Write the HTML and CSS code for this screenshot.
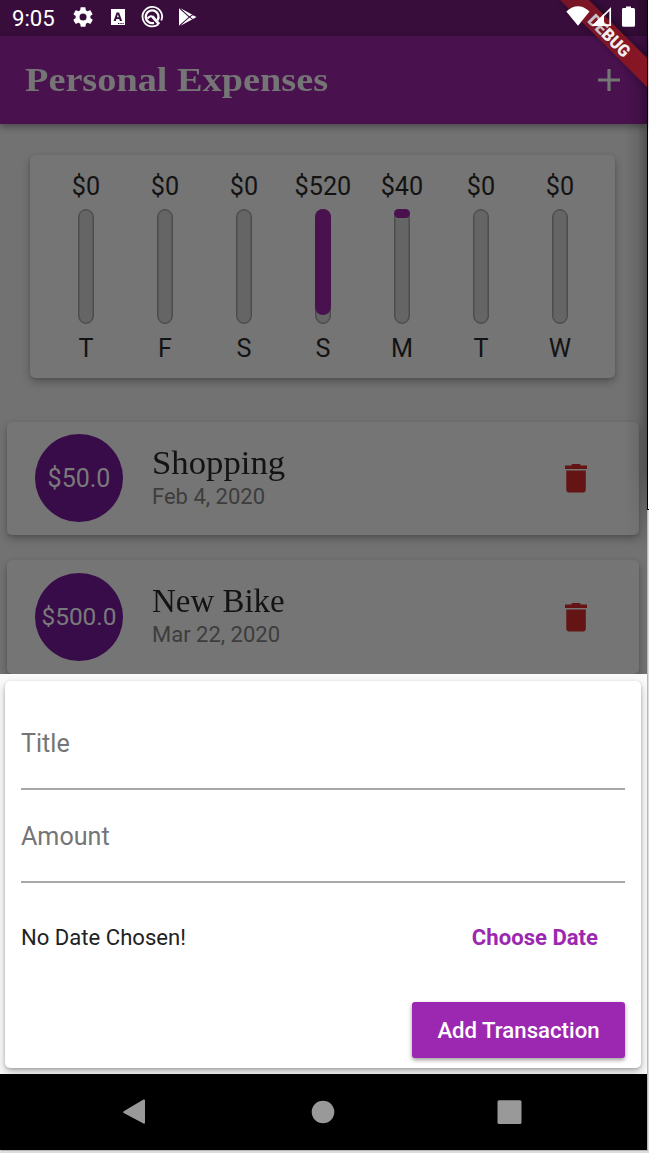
FILE: index.html
```html
<!DOCTYPE html>
<html lang="en">
<head>
<meta charset="utf-8">
<title>Personal Expenses</title>
<link rel="stylesheet" href="styles.css">
</head>
<body>
<div class="phone">
  <header class="status">
    <span class="clock">9:05</span>
    <svg class="status-icons" width="130" height="36" viewBox="70 0 130 36" fill="#fff">
      <g transform="translate(71.3 5.3) scale(.98)"><path d="M19.4 13c0-.3.1-.6.1-1s0-.7-.1-1l2.1-1.600c.2-.2.2-.4.1-.6l-2-3.500c-.1-.2-.4-.3-.6-.2l-2.500 1c-.5-.4-1.100-.7-1.700-1l-.4-2.600c0-.3-.2-.4-.5-.4h-4c-.2 0-.4.1-.5.4L9.100 5.100c-.6.2-1.200.6-1.700 1l-2.500-1c-.2-.1-.5 0-.6.2l-2 3.500c-.1.2-.1.400.1.6L4.500 11c0 .3-.1.600-.1 1s0 .7.100 1l-2.100 1.600c-.2.2-.2.4-.1.6l2 3.500c.1.200.4.300.6.2l2.500-1c.500.4 1.100.7 1.700 1l.4 2.600c0 .2.200.4.5.4h4c.2 0 .5-.2.5-.4l.4-2.600c.6-.2 1.200-.6 1.700-1l2.500 1c.2.100.5 0 .6-.2l2-3.500c.1-.2.1-.5-.1-.6zM12 15.600a3.600 3.600 0 1 1 0-7.200 3.600 3.600 0 0 1 0 7.200z" fill-rule="evenodd"/></g>
      <path fill-rule="evenodd" d="M111 9h14v16h-14zM113.600 21h2.200l.6-1.900h2.900l.6 1.900h2.200l-3-8.600h-2.500zM117 17.300l.9-3 .9 3zM118 23v1h1.400v-1zM120.300 23v1h1.400v-1zM122.500 23v1h1.200v-1z"/>
      <g fill="none" stroke="#fff"><path d="M158.500 24.200A9.800 9.800 0 1 1 161.300 20.500" stroke-width="1.800"/><path d="M157.500 20.300A6.400 6.400 0 1 0 154 22.900" stroke-width="2.300"/><path d="M152.300 16.500l6.800 7.600" stroke-width="2.700"/><path d="M147.500 18.500q3.500-4.200 6.400-.8" stroke-width="2"/></g>
      <path d="M179 8.300L188.500 17 179 25.800z"/><path d="M180 8l12.500 6.800-3.400 1.800zM180 26l12.500-6.700-3.400-2zM193 15.200l3.500 1.800-3.500 2-3-2z"/>
      <path d="M180 8.500l12.500 11M180 25.500l12.500-11" stroke="#380d3c" stroke-width=".8"/>
    </svg>
  </header>
  <div class="appbar">
    <h1 class="app-title">Personal Expenses</h1>
    <svg class="plus" width="22" height="22" viewBox="0 0 22 22"><path d="M11 0v22M0 11h22" stroke="#757575" stroke-width="3.200"/></svg>
  </div>
  <main class="content">
    <section class="chart">
      <div class="day"><span>$0</span><i class="bar"></i><span>T</span></div>
      <div class="day"><span>$0</span><i class="bar"></i><span>F</span></div>
      <div class="day"><span>$0</span><i class="bar"></i><span>S</span></div>
      <div class="day"><span>$520</span><i class="bar"><b class="fill" style="height:106px"></b></i><span>S</span></div>
      <div class="day"><span>$40</span><i class="bar"><b class="fill" style="height:9px"></b></i><span>M</span></div>
      <div class="day"><span>$0</span><i class="bar"></i><span>T</span></div>
      <div class="day"><span>$0</span><i class="bar"></i><span>W</span></div>
    </section>
    <article class="item">
      <div class="amount">$50.0</div>
      <div class="info"><h2 class="name name-shopping">Shopping</h2><p class="date">Feb 4, 2020</p></div>
      <svg class="trash" width="22" height="29" viewBox="0 0 22 29" fill="#641414"><path d="M0 1.500h6L7.300 0h7.400L16 1.500h6V5H0zM1.300 6.500h19.500v19a3 3 0 0 1-3 3H4.300a3 3 0 0 1-3-3z"/></svg>
    </article>
    <article class="item">
      <div class="amount">$500.0</div>
      <div class="info"><h2 class="name name-bike">New Bike</h2><p class="date">Mar 22, 2020</p></div>
      <svg class="trash" width="22" height="29" viewBox="0 0 22 29" fill="#641414"><path d="M0 1.500h6L7.300 0h7.400L16 1.500h6V5H0zM1.300 6.500h19.500v19a3 3 0 0 1-3 3H4.300a3 3 0 0 1-3-3z"/></svg>
    </article>
  </main>
  <section class="sheet">
    <form class="form">
      <div class="field">Title</div>
      <div class="field">Amount</div>
      <div class="date-row"><span>No Date Chosen!</span><span class="choose">Choose Date</span></div>
      <div class="submit">Add Transaction</div>
    </form>
  </section>
  <nav class="nav">
    <svg width="647" height="76" viewBox="0 0 647 76" fill="#999"><path d="M123.700 37.200L143.500 25.600q1.500-.7 1.500 1v22q0 1.600-1.500.8L123.700 39q-1.400-.9 0-1.800z"/><circle cx="323" cy="38" r="11.300"/><rect x="497.500" y="26.200" width="24" height="23.800" rx="1.500"/></svg>
  </nav>
  <div class="edge-shade"></div>
  <div class="edge-line"></div>
  <svg class="debug" width="89" height="90" viewBox="0 0 89 90">
    <defs><filter id="soft" x="-20%" y="-20%" width="140%" height="140%"><feGaussianBlur stdDeviation="4"/></filter>
    <linearGradient id="band"><stop offset="0" stop-color="#741526"/><stop offset="1" stop-color="#891624"/></linearGradient></defs>
    <path d="M4 0H34L90 56V86z" fill="#000" opacity=".45" filter="url(#soft)"/>
    <path d="M2 0H31L89 58V87z" fill="url(#band)"/>
    <text class="debug-text" transform="translate(51.500 35.500) rotate(45)" x="0" y="6.300" text-anchor="middle" textLength="52" lengthAdjust="spacingAndGlyphs"><tspan class="debug-dim">DE</tspan>BUG</text>
    <g fill="#fff"><path d="M8.300 11.500Q20 1 31.500 11.500L20 25.800z"/><path d="M36 25.200L52.200 9v16.200z" fill="none" stroke="#fff" stroke-width="1.700"/><path d="M34 26L46 14v12z"/><path d="M65 8h3V6.500h5V8h2.500q1.500 0 1.500 1.500v15.700q0 1.500-1.500 1.500h-10q-1.500 0-1.500-1.500V9.500q0-1.500 1-1.500z"/></g>
  </svg>
</div>
</body>
</html>
```
FILE: styles.css
```css
* { box-sizing: border-box; }
body {
  margin: 0;
  width: 649px;
  height: 1153px;
  overflow: hidden;
  background: #dcdcdc;
  font-family: Roboto, sans-serif;
}
.phone {
  position: relative;
  width: 647px;
  height: 1150px;
  display: flex;
  flex-direction: column;
  background: #727272;
  box-shadow: 1px 1px 0 #b8b8b8;
}
.status {
  height: 36px;
  flex: none;
  display: flex;
  align-items: center;
  padding-left: 12px;
  background: #380d3c;
  color: #fff;
}
.clock { width: 58px; font-size: 22.2px; line-height: 36px; }
.status-icons { flex: none; }
.appbar {
  height: 88px;
  flex: none;
  display: flex;
  justify-content: space-between;
  align-items: center;
  padding: 0 27px 0 25px;
  background: #49124f;
  box-shadow: 0 3px 7px rgba(0, 0, 0, .35);
  z-index: 1;
}
.app-title {
  margin: 0;
  font: bold 34px/40px "Liberation Serif", serif;
  color: #757575;
  transform: scaleX(1.126);
  transform-origin: left;
}
.content {
  height: 550px;
  flex: none;
  padding-top: 31px;
  overflow: hidden;
  background: #727272;
}
.chart {
  width: 585px;
  height: 222.5px;
  margin-left: 30.4px;
  padding: 17px 16px 0;
  display: grid;
  grid-template-columns: repeat(7, 79px);
  border-radius: 5px;
  background: #757575;
  box-shadow: 0 4px 8px rgba(0, 0, 0, .25), 0 1px 3px rgba(0, 0, 0, .1);
}
.day {
  display: flex;
  flex-direction: column;
  align-items: center;
  font-size: 25.2px;
  line-height: 30px;
  color: #131313;
}
.bar {
  width: 16px;
  height: 115px;
  margin: 7px 0 10px;
  border: 1px solid #4d4d4d;
  border-radius: 8px;
  background: #656565;
  box-shadow: inset 0 0 0 .5px #4d4d4d;
}
.fill {
  display: block;
  width: 16px;
  margin: -1px;
  border-radius: 8px;
  background: #49124f;
}
.item {
  width: 632px;
  height: 113.5px;
  margin: 44px 0 0 7px;
  padding: 0 52px 0 28px;
  display: flex;
  align-items: center;
  border-radius: 5px;
  background: #757575;
  box-shadow: 0 4px 8px rgba(0, 0, 0, .25), 0 1px 3px rgba(0, 0, 0, .1);
}
.item + .item { margin-top: 25px; }
.amount {
  width: 88px;
  height: 88px;
  flex: none;
  border-radius: 50%;
  background: #380c49;
  color: #7a7a7a;
  font-size: 25px;
  line-height: 89px;
  text-align: center;
}
.item + .item .amount { font-size: 24.4px; line-height: 87px; }
.info { flex: 1; padding-left: 29px; }
.name {
  margin: 0;
  font: 33px/36px "Liberation Serif", serif;
  color: #131313;
  transform-origin: left;
}
.name-shopping { transform: scaleX(1.053); }
.name-bike { transform: scaleX(.998); }
.date { margin: 1px 0 0; font-size: 22px; line-height: 30px; color: #3d3d3d; }
.trash { flex: none; }
.item + .item .trash { margin-top: 1px; }
.sheet {
  height: 400px;
  flex: none;
  padding: 7px 6px 6px 5px;
  overflow: hidden;
  background: #fafafa;
}
.form {
  height: 387px;
  padding: 16px;
  border-radius: 5px;
  background: #fff;
  box-shadow: 0 4px 8px rgba(0, 0, 0, .26), 0 1px 3px rgba(0, 0, 0, .18);
}
.field {
  height: 93px;
  padding-top: 32px;
  border-bottom: 2px solid #a8a8a8;
  color: #757575;
  font-size: 25.1px;
  line-height: 30px;
}
.date-row {
  height: 108px;
  display: flex;
  justify-content: space-between;
  align-items: center;
  padding-right: 27px;
  color: #222;
  font-size: 22.1px;
}
.choose { color: #9c27b0; font-weight: bold; }
.submit {
  width: 213px;
  height: 56px;
  margin: 11px 0 0 auto;
  border-radius: 3px;
  background: #9c27b0;
  box-shadow: 0 2px 4px rgba(0, 0, 0, .4);
  color: #fff;
  font-size: 22.2px;
  font-weight: 500;
  line-height: 56px;
  text-align: center;
}
.nav { height: 76px; flex: none; background: #000; }
.nav svg { display: block; }
.edge-shade {
  position: absolute;
  top: 0;
  right: 0;
  width: 22px;
  height: 550px;
  z-index: 2;
  background: linear-gradient(90deg, transparent, rgba(0, 0, 0, .08) 55%, rgba(0, 0, 0, .28));
  -webkit-mask-image: linear-gradient(#000 470px, transparent);
  mask-image: linear-gradient(#000 470px, transparent);
}
.edge-line {
  position: absolute;
  top: 0;
  left: 647px;
  width: 2px;
  height: 510px;
  border-left: 1px solid #000;
  border-bottom: 1px solid #000;
  background: #fff;
}
.debug { position: absolute; top: 0; left: 558px; z-index: 3; }
.debug-text { font: 900 17px Roboto, sans-serif; fill: #f2eeee; }
.debug-dim { fill: #cbc5c7; }
```
